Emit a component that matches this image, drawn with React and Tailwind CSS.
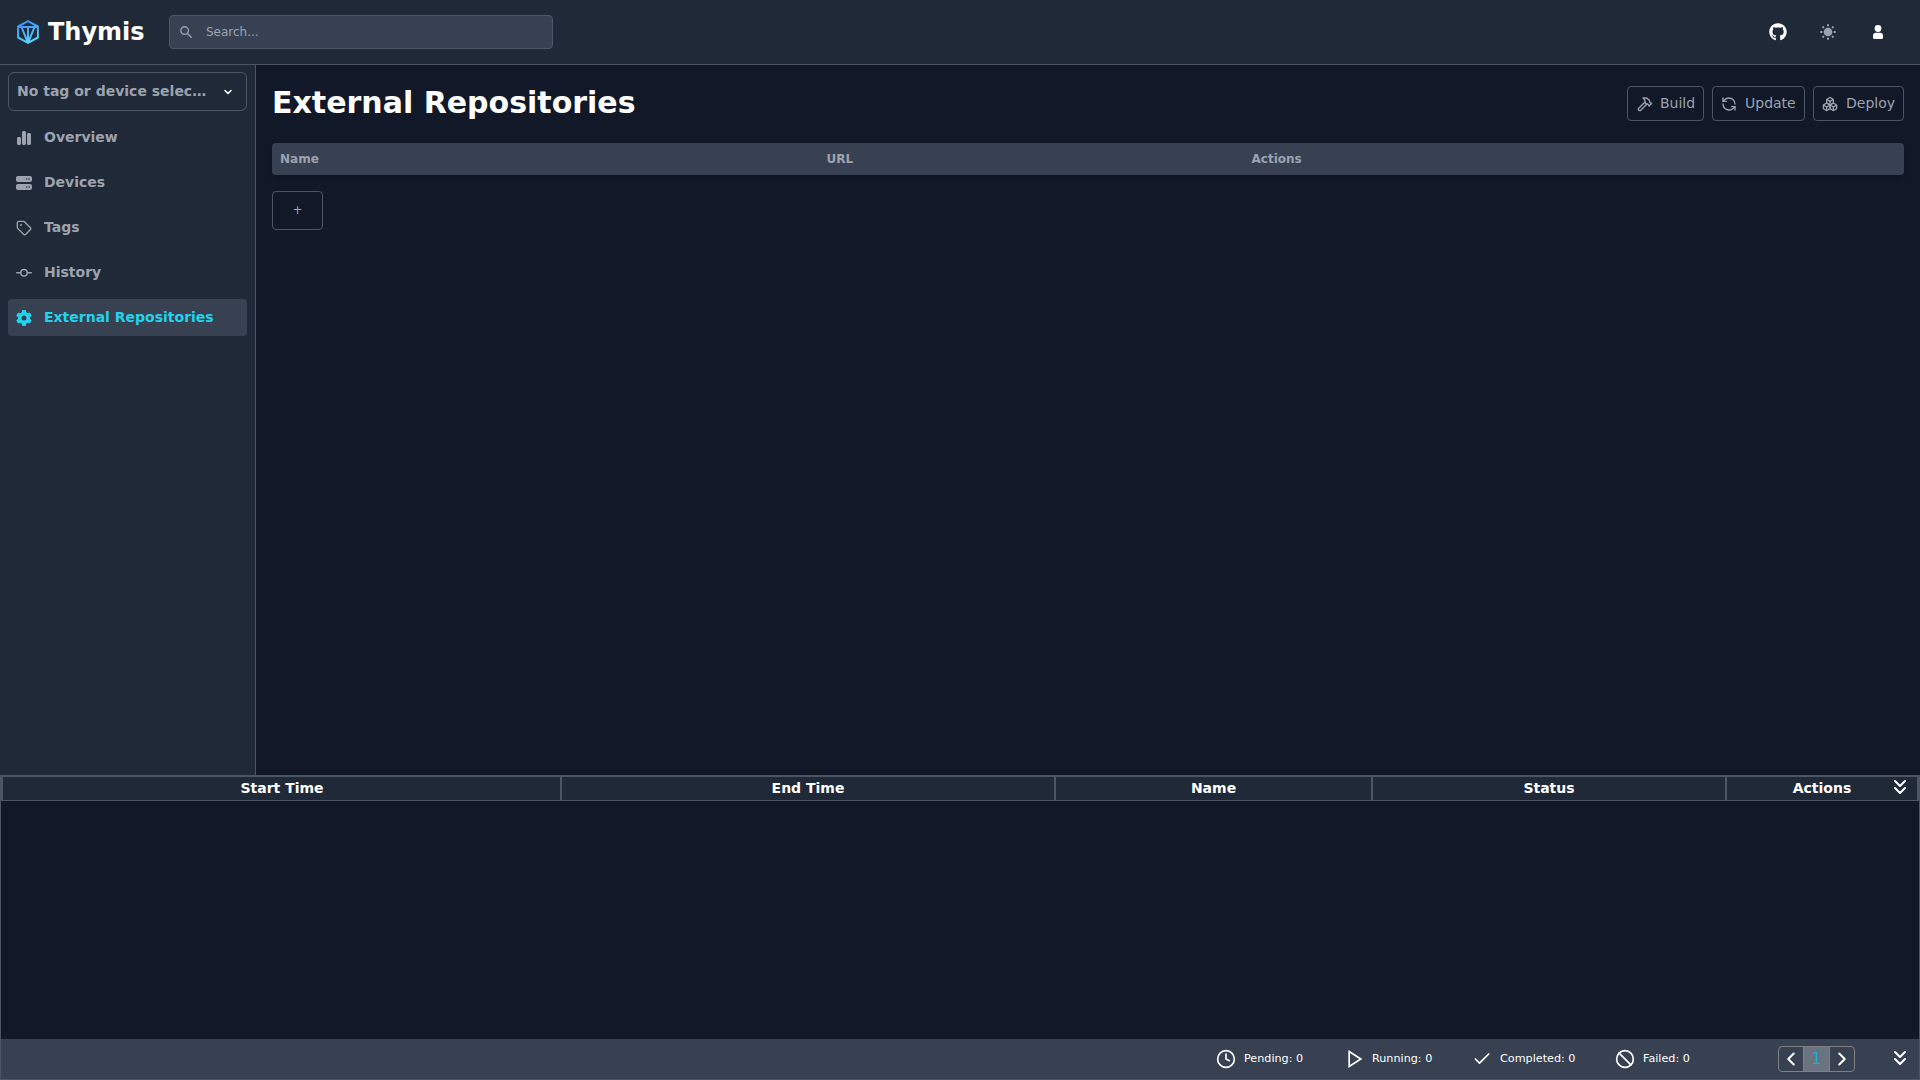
import { Hammer, RefreshCcw, Boxes, Clock, Check, Ban, ChevronsDown, ChevronLeft, ChevronRight, ChevronDown, Tag } from "lucide-react";
import { FaChartSimple, FaServer, FaGear, FaGithub } from "react-icons/fa6";

function Logo() {
  return (
    <svg className="h-6 w-[22px] shrink-0" viewBox="0 0 22 24" fill="none" stroke="url(#logo)" strokeWidth="2" strokeLinejoin="round">
      <defs>
        <linearGradient id="logo" x1="0" y1="0" x2="8" y2="24" gradientUnits="userSpaceOnUse">
          <stop stopColor="#3b82f6" />
          <stop offset="1" stopColor="#5ad1fa" />
        </linearGradient>
      </defs>
      <path d="M11 1.100 20.900 6.500V17.500L11 22.900 1.100 17.500V6.500ZM1.100 6.900H20.900M4.500 7.200 11 22.900 17.500 7.200M11 6.900V22.900" />
    </svg>
  );
}

function Sun() {
  return (
    <svg className="size-4" viewBox="0 0 16 16" fill="none" stroke="currentColor" strokeWidth="2" strokeLinecap="round">
      <circle cx="8" cy="8" r="4.3" fill="currentColor" stroke="none" />
      <path d="M8 1v.6M8 14.400v.6M1 8h.6M14.400 8h.6M3.100 3.100l.3.3M12.600 12.600l.3.3M3.100 12.900l.3-.3M12.600 3.400l.3-.3" />
    </svg>
  );
}

function Person() {
  return (
    <svg className="h-[14px] w-[10px]" viewBox="0 0 10 14" fill="currentColor">
      <circle cx="5" cy="3.5" r="3.4" />
      <path d="M3 7.8h4a3 3 0 0 1 3 3V12.500a1.500 1.500 0 0 1-1.500 1.500h-7A1.500 1.500 0 0 1 0 12.500v-1.700a3 3 0 0 1 3-3Z" />
    </svg>
  );
}

function Commit({ className }) {
  return (
    <svg className={className} viewBox="0 0 16 16" fill="currentColor">
      <path d="M11.930 8.500a4.002 4.002 0 0 1-7.860 0H.75a.75.75 0 0 1 0-1.500h3.320a4.002 4.002 0 0 1 7.860 0h3.320a.75.75 0 0 1 0 1.500Zm-1.430-.75a2.500 2.500 0 1 0-5 0 2.500 2.500 0 0 0 5 0Z" />
    </svg>
  );
}

function Play() {
  return (
    <svg className="size-5" viewBox="0 0 24 24" fill="none" stroke="currentColor" strokeWidth="2">
      <polygon points="5 3 19 12 5 21 5 3" />
    </svg>
  );
}

const nav = [
  { label: "Overview", Icon: FaChartSimple },
  { label: "Devices", Icon: FaServer },
  { label: "Tags", Icon: Tag },
  { label: "History", Icon: Commit },
  { label: "External Repositories", Icon: FaGear, active: true },
];

const actions = [
  { label: "Build", Icon: Hammer, layout: "w-[77px] gap-[7.5px] pl-[8.5px]" },
  { label: "Update", Icon: RefreshCcw, layout: "w-[93px] gap-2 pl-2" },
  { label: "Deploy", Icon: Boxes, layout: "w-[91px] gap-2 pl-2" },
];

function Stat({ icon, text, className }) {
  return (
    <div className={`flex items-center ${className}`}>
      {icon}
      <span className="text-[11.2px]">{text}</span>
    </div>
  );
}

export default function App() {
  return (
    <div className="flex h-[1080px] w-[1920px] flex-col overflow-hidden bg-[#111827] font-['DejaVu_Sans',sans-serif] text-[#9ca3af]">
      <header className="flex h-[65px] shrink-0 items-center border-b border-[#4b5563] bg-[#1f2937] pl-[17px] pr-[37px]">
        <Logo />
        <span className="ml-[9px] w-[121px] text-2xl font-bold text-white">Thymis</span>
        <div className="flex h-[34px] w-[384px] items-center gap-[14px] rounded border border-[#4b5563] bg-[#374151] pl-[10px] text-xs">
          <svg className="size-3" viewBox="0 0 12 12" fill="none" stroke="currentColor" strokeWidth="1.4" strokeLinecap="round">
            <circle cx="4.600" cy="4.600" r="3.800" />
            <path d="m7.500 7.500 3.700 3.700" />
          </svg>
          Search...
        </div>
        <div className="ml-auto flex items-center">
          <FaGithub className="mr-[33px] size-[18px] text-white" />
          <Sun />
          <span className="ml-[37px] text-white"><Person /></span>
        </div>
      </header>

      <div className="flex h-[710px] shrink-0">
        <aside className="flex w-64 flex-col gap-2 border-r border-[#4b5563] bg-[#1f2937] px-2 pt-[7px] text-sm font-bold">
          <div className="flex h-[39px] items-center justify-between rounded-md border border-[#4b5563] pb-px pl-2 pr-3">
            No tag or device selec…
            <ChevronDown className="mt-px size-3 text-white" strokeWidth={3} />
          </div>
          {nav.map(({ label, Icon, active }) => (
            <div key={label} className={`flex h-[37px] items-center gap-3 rounded pb-px pl-2 ${active ? "bg-[#374151] text-[#22d3ee]" : ""}`}>
              <Icon className="mt-0.5 size-4" />
              {label}
            </div>
          ))}
        </aside>

        <main className="flex grow flex-col px-4 pt-[21px]">
          <div className="flex h-[35px] items-center justify-between">
            <h1 className="pb-0.5 text-3xl font-bold text-white">External Repositories</h1>
            <div className="flex gap-2">
              {actions.map(({ label, Icon, layout }) => (
                <button key={label} className={`flex h-[35px] items-center rounded border border-[#4b5563] pb-px text-sm ${layout}`}>
                  <Icon className="mt-0.5 size-4" />
                  {label}
                </button>
              ))}
            </div>
          </div>
          <div className="mt-[22px] flex h-8 shrink-0 items-center rounded bg-[#374151] pl-2 text-xs font-bold shadow-md">
            <span className="w-[546.5px]">Name</span>
            <span className="w-[425px]">URL</span>
            <span>Actions</span>
          </div>
          <button className="mt-4 h-[39px] w-[51px] rounded border border-[#4b5563] pb-0.5 text-xs">+</button>
        </main>
      </div>

      <section className="flex grow flex-col border border-t-2 border-[#4b5563] text-white">
        <div className="relative flex h-6 shrink-0 border-x-2 border-b border-[#4b5563] bg-[#1f2937] text-center text-sm font-bold leading-[22px]">
          <div className="w-[559px] border-r-2 border-[#4b5563] pl-px">Start Time</div>
          <div className="w-[494px] border-r-2 border-[#4b5563]">End Time</div>
          <div className="w-[317px] border-r-2 border-[#4b5563]">Name</div>
          <div className="w-[354px] border-r-2 border-[#4b5563]">Status</div>
          <div className="grow">Actions</div>
          <ChevronsDown className="absolute -top-0.5 right-[5px] size-6" />
        </div>
        <div className="grow" />
        <footer className="flex h-10 shrink-0 items-center bg-[#374151] pl-[1215px]">
          <Stat className="w-[129px] gap-2" icon={<Clock className="size-5" />} text="Pending: 0" />
          <Stat className="w-[127px] gap-[7px]" icon={<Play />} text="Running: 0" />
          <Stat className="w-[143px] gap-2" icon={<Check className="size-5" />} text="Completed: 0" />
          <Stat className="w-[163px] gap-2" icon={<Ban className="size-5" />} text="Failed: 0" />
          <div className="flex h-[26px] w-[77px] overflow-hidden rounded border border-[#808080]">
            <span className="flex w-6 items-center justify-center"><ChevronLeft className="size-[22px]" strokeWidth={2.2} /></span>
            <span className="flex w-[27px] items-center justify-center border-x border-[#808080] bg-[#6b7280] text-base text-[#06b6d4]">1</span>
            <span className="flex grow items-center justify-center"><ChevronRight className="size-[22px]" strokeWidth={2.2} /></span>
          </div>
          <ChevronsDown className="-mt-0.5 ml-[33px] size-6" />
        </footer>
      </section>
    </div>
  );
}
